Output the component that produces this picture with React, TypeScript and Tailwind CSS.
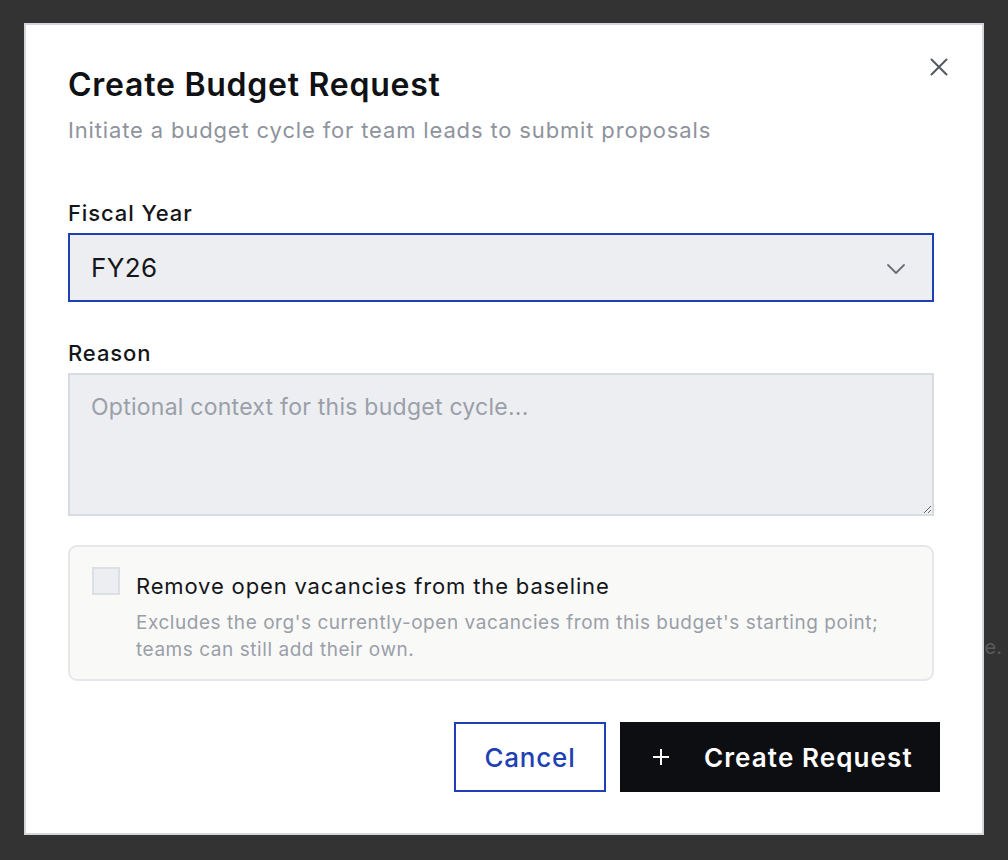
import React, { useState } from "react";

/**
 * Budget request dialog shown over the planning page.
 */

const fiscalYears = ["FY25", "FY26", "FY27"];

function CloseIcon(): React.ReactElement {
  return (
    <svg className="w-[18px] h-[18px]" viewBox="0 0 18 18" fill="none" stroke="currentColor" aria-hidden="true">
      <path strokeWidth={2} strokeLinecap="round" d="M1.5 1.5l15 15M16.5 1.5l-15 15" />
    </svg>
  );
}

function ChevronIcon(): React.ReactElement {
  return (
    <svg className="w-[20px] h-[12px]" viewBox="0 0 20 12" fill="none" stroke="currentColor" aria-hidden="true">
      <path strokeWidth={1.8} strokeLinecap="round" strokeLinejoin="round" d="M2 2l8 8 8-8" />
    </svg>
  );
}

function PlusIcon(): React.ReactElement {
  return (
    <svg className="w-[18px] h-[18px]" viewBox="0 0 18 18" fill="none" stroke="currentColor" aria-hidden="true">
      <path strokeWidth={2} d="M9 1v16M1 9h16" />
    </svg>
  );
}

export default function App(): React.ReactElement {
  const [year, setYear] = useState("FY26");
  const [removeVacancies, setRemoveVacancies] = useState(false);

  return (
    <div className="relative h-[860px] w-[1008px] overflow-hidden bg-[#333333] font-['Inter',sans-serif]">
      {/* Page content sitting behind the overlay */}
      <p className="absolute top-[633px] right-[6px] text-[20px] leading-[28px] text-[#5a5a5a] whitespace-nowrap">
        Budget cycles start from the baseline.
      </p>

      <div className="relative pt-[23px] pl-[24px]">
        <div className="w-[960px] h-[812px] bg-white border-2 border-[#d3d7dd] pt-[40px] pl-[42px] pr-[48px]">
          {/* Header */}
          <div className="flex items-start justify-between">
            <div>
              <h2 className="text-[32px] leading-[40px] font-semibold tracking-[0.75px] text-[#0f1115]">
                Create Budget Request
              </h2>
              <p className="mt-[11px] text-[22px] leading-[28px] tracking-[0.85px] text-[#8e939c]">
                Initiate a budget cycle for team leads to submit proposals
              </p>
            </div>
            <button className="mt-[-7px] mr-[-14px] text-[#555a60]" aria-label="Close">
              <CloseIcon />
            </button>
          </div>

          {/* Fiscal year */}
          <label className="block mt-[55px] text-[22px] leading-[28px] font-medium tracking-[0.9px] text-[#14161a]">
            Fiscal Year
          </label>
          <div className="relative mt-[6px]">
            <select
              value={year}
              onChange={(e) => setYear(e.target.value)}
              className="appearance-none w-[866px] h-[69px] bg-[#eceef2] border-2 border-[#1f3fb4] pl-[21px] text-[26px] tracking-[0.4px] text-[#14161a] outline-none"
            >
              {fiscalYears.map((fy) => (
                <option key={fy} value={fy}>
                  {fy}
                </option>
              ))}
            </select>
            <span className="pointer-events-none absolute right-[28px] top-[30px] text-[#6b6f76]">
              <ChevronIcon />
            </span>
          </div>

          {/* Reason */}
          <label className="block mt-[37px] text-[22px] leading-[28px] font-medium tracking-[0.9px] text-[#14161a]">
            Reason
          </label>
          <textarea
            placeholder="Optional context for this budget cycle..."
            className="block mt-[6px] w-[866px] h-[143px] bg-[#eceef2] border-2 border-[#d8dce2] px-[21px] py-[16px] text-[23px] leading-[32px] tracking-[0.25px] text-[#14161a] placeholder:text-[#9a9fa8] outline-none"
          />

          {/* Vacancy option */}
          <div className="mt-[29px] w-[866px] h-[136px] rounded-[9px] border-2 border-[#e6e7ea] bg-[#f9f9f8] pl-[22px] pt-[20px] flex gap-[16px]">
            <button
              onClick={() => setRemoveVacancies(!removeVacancies)}
              className="w-[28px] h-[28px] shrink-0 bg-[#eceef2] border-2 border-[#dcdfe4]"
              aria-pressed={removeVacancies}
            />
            <div className="mt-[4px]">
              <div className="text-[22px] leading-[30px] tracking-[0.85px] text-[#14161a]">
                Remove open vacancies from the baseline
              </div>
              <p className="mt-[8px] text-[19px] leading-[27px] tracking-[0.55px] text-[#9a9fa8]">
                Excludes the org's currently-open vacancies from this budget's starting point;
                <br />
                teams can still add their own.
              </p>
            </div>
          </div>

          {/* Actions */}
          <div className="mt-[41px] flex justify-end gap-[14px] mr-[-6px]">
            <button className="w-[152px] h-[70px] border-2 border-[#1f3fb4] bg-white text-[26px] font-medium tracking-[0.8px] text-[#1f3fb4]">
              Cancel
            </button>
            <button className="w-[320px] h-[70px] bg-[#0d0e12] text-white flex items-center pl-[32px] gap-[34px] text-[26px] font-semibold tracking-[1.1px]">
              <PlusIcon />
              <span>Create Request</span>
            </button>
          </div>
        </div>
      </div>
    </div>
  );
}
